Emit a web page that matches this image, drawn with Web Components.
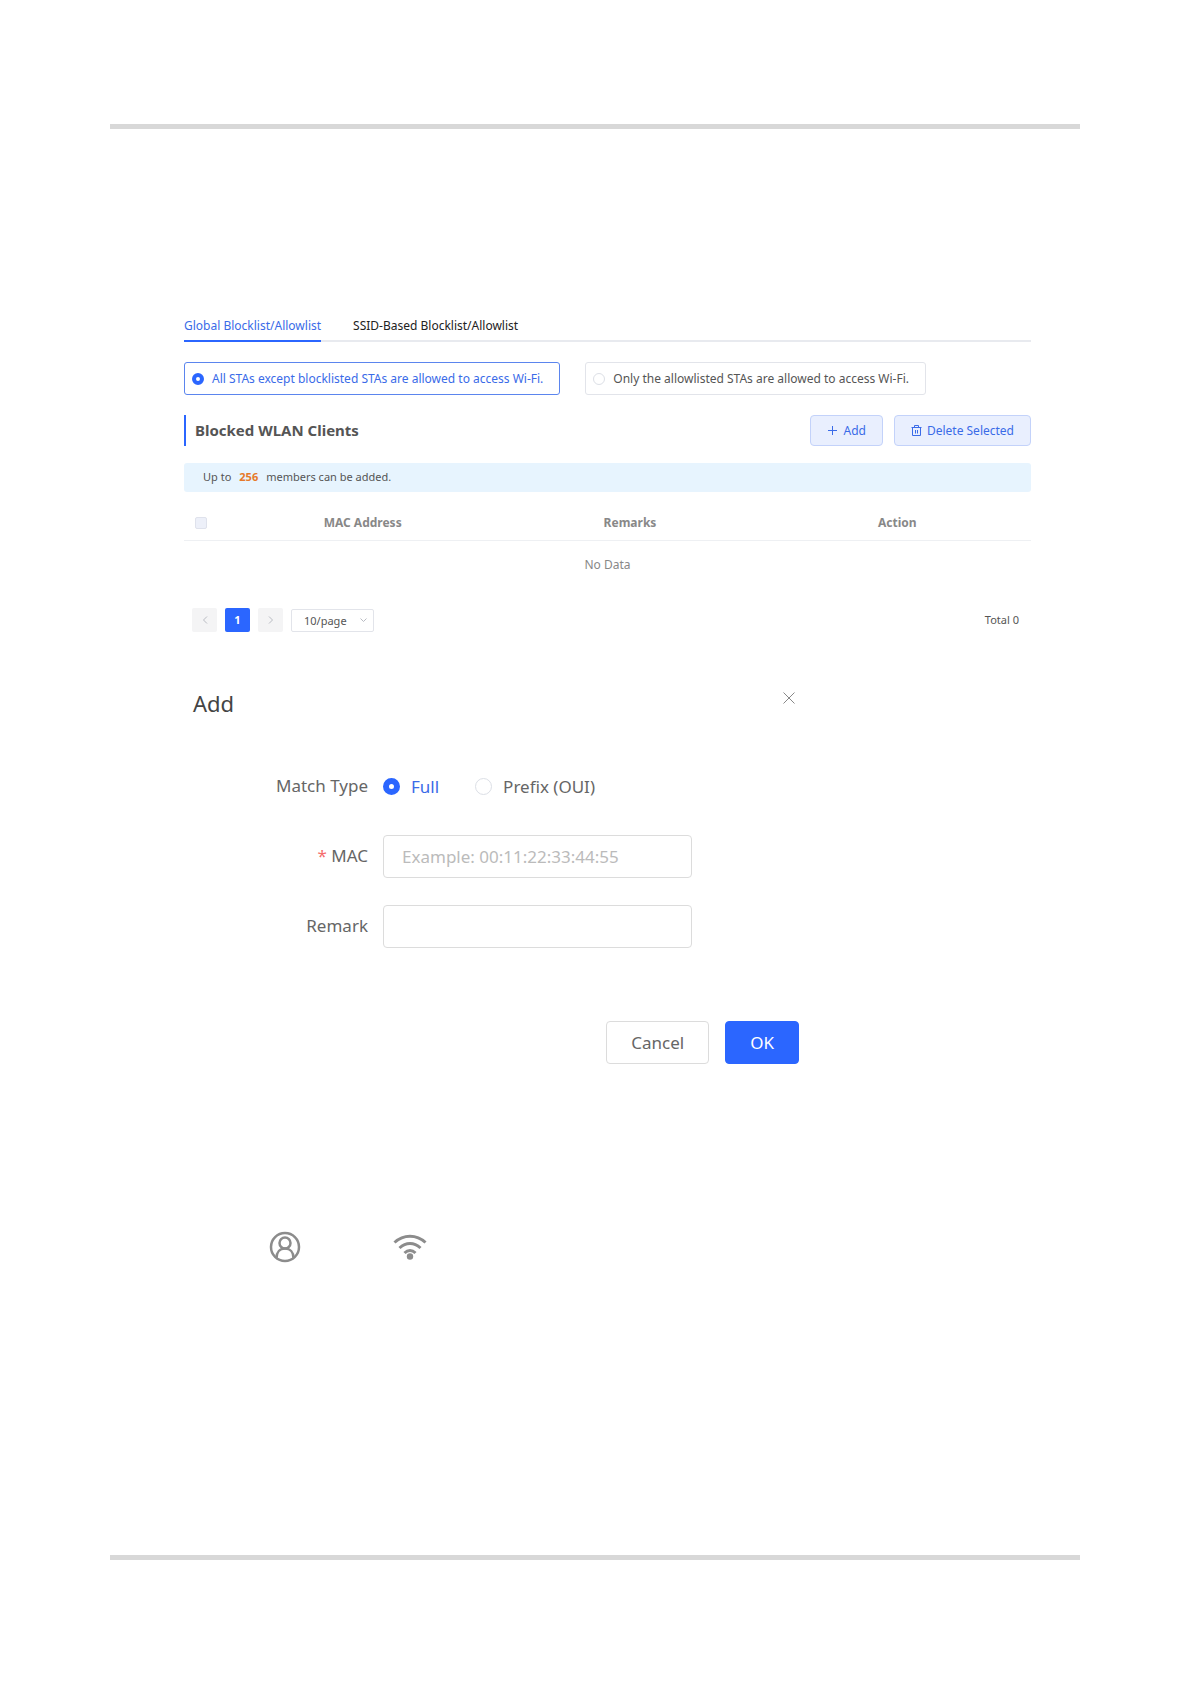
<!DOCTYPE html>
<html lang="en">
<head>
<meta charset="utf-8">
<meta name="viewport" content="width=device-width, initial-scale=1">
<title>Blocklist/Allowlist</title>
<style>
    body {
        margin: 0;
        background: #fff;
        color: #555;
        font: 12px/16px "Noto Sans", "Open Sans", sans-serif;
        --blue: #2b66ff;
        --link: #3a6be8;
    }
</style>
</head>
<body>
<doc-page>
    <list-tabs></list-tabs>
    <access-mode></access-mode>
    <section-bar heading="Blocked WLAN Clients">
        <tool-button icon="plus">Add</tool-button>
        <tool-button icon="trash">Delete Selected</tool-button>
    </section-bar>
    <info-banner>Up to <b slot="count">256</b><span slot="after">members can be added.</span></info-banner>
    <client-table></client-table>
    <page-nav></page-nav>
    <add-dialog></add-dialog>
    <icon-strip></icon-strip>
</doc-page>

<script>
class BaseElement extends HTMLElement {
    constructor() {
        super();
        this.attachShadow({ mode: 'open' });
        this.shadowRoot.innerHTML = `
            <style>
                * { box-sizing: border-box; }
                :host { display: block; }
                button, input, select { font: inherit; color: inherit; margin: 0; }
                svg { display: block; fill: none; stroke: currentColor; }
                input[type=radio] {
                    appearance: none;
                    flex: none;
                    width: 12px;
                    height: 12px;
                    border: 1px solid #dcdfe6;
                    border-radius: 50%;
                    background: #fff;
                }
                input[type=radio]:checked {
                    border: 4px solid var(--blue);
                }
            </style>
            ${this.render()}
        `;
    }
}

class DocPage extends BaseElement {
    render() {
        return `
            <style>
                :host { padding: 124px 111px 124px 110px; }
                hr { height: 5px; margin: 0; border: 0; background: #d8d8d8; }
                main { padding: 186px 49px 292px 74px; }
            </style>
            <hr>
            <main><slot></slot></main>
            <hr>
        `;
    }
}

class ListTabs extends BaseElement {
    render() {
        return `
            <style>
                nav {
                    display: flex;
                    gap: 32px;
                    border-bottom: 2px solid #e8eaef;
                }
                a {
                    margin-bottom: -2px;
                    padding: 3px 0 6px;
                    border-bottom: 2px solid transparent;
                    color: #222;
                    text-decoration: none;
                }
                a[aria-current] { color: var(--link); border-color: var(--blue); }
            </style>
            <nav>
                <a href="#global" aria-current="page">Global Blocklist/Allowlist</a>
                <a href="#ssid">SSID-Based Blocklist/Allowlist</a>
            </nav>
        `;
    }
}

class AccessMode extends BaseElement {
    render() {
        return `
            <style>
                :host { display: flex; gap: 25px; margin-top: 20px; }
                label {
                    display: flex;
                    align-items: center;
                    gap: 8px;
                    height: 33px;
                    padding: 0 16px 0 7px;
                    border: 1px solid #e2e4ea;
                    border-radius: 3px;
                }
                label:has(:checked) { color: var(--link); border-color: #5b85ee; }
            </style>
            <label><input type="radio" name="mode" checked>All STAs except blocklisted STAs are allowed to access Wi-Fi.</label>
            <label><input type="radio" name="mode">Only the allowlisted STAs are allowed to access Wi-Fi.</label>
        `;
    }
}

class SectionBar extends BaseElement {
    render() {
        return `
            <style>
                :host {
                    display: flex;
                    align-items: center;
                    gap: 11px;
                    height: 31px;
                    margin-top: 20px;
                }
                h2 {
                    flex: 1;
                    margin: 0;
                    padding-left: 9px;
                    border-left: 2px solid var(--blue);
                    font-size: 15px;
                    line-height: 31px;
                }
            </style>
            <h2></h2>
            <slot></slot>
        `;
    }

    connectedCallback() {
        this.shadowRoot.querySelector('h2').textContent = this.getAttribute('heading');
    }
}

const toolIcons = {
    plus: '<path d="M5.5 1v9M1 5.5h9"/>',
    trash: '<path d="M.5 2.5h10M3.5 2.5v-2h4v2M1.5 2.5v8h8v-8M4.5 5v3.500M6.500 5v3.500"/>'
};

class ToolButton extends BaseElement {
    render() {
        return `
            <style>
                button {
                    display: flex;
                    align-items: center;
                    gap: 5px;
                    height: 31px;
                    padding: 0 16px;
                    border: 1px solid #c3d2fa;
                    border-radius: 4px;
                    background: #e9effe;
                    color: var(--link);
                }
            </style>
            <button type="button">
                <svg width="11" height="11" viewBox="0 0 11 11">${toolIcons[this.getAttribute('icon')]}</svg>
                <slot></slot>
            </button>
        `;
    }
}

class InfoBanner extends BaseElement {
    render() {
        return `
            <style>
                :host {
                    display: flex;
                    align-items: center;
                    gap: 8px;
                    height: 29px;
                    margin-top: 17px;
                    padding: 0 19px 2px;
                    box-sizing: border-box;
                    border-radius: 3px;
                    background: #e7f4fe;
                    font-size: 11px;
                }
                ::slotted(b) { color: #e6792b; }
            </style>
            <span><slot></slot></span>
            <slot name="count"></slot>
            <slot name="after"></slot>
        `;
    }
}

class ClientTable extends BaseElement {
    render() {
        return `
            <style>
                :host { margin-top: 12px; }
                table {
                    width: 100%;
                    table-layout: fixed;
                    border-collapse: collapse;
                    color: #888;
                    text-align: center;
                }
                th, td { padding: 0; }
                th { height: 36px; padding-top: 2px; border-bottom: 1px solid #eef0f3; }
                th:first-child { width: 45px; padding-left: 11px; text-align: left; }
                td { height: 50px; }
                input {
                    appearance: none;
                    display: block;
                    width: 12px;
                    height: 12px;
                    border: 1px solid #dfe2ec;
                    border-radius: 2px;
                    background: #edf0f9;
                }
            </style>
            <table>
                <thead>
                    <tr>
                        <th><input type="checkbox" aria-label="Select all" disabled></th>
                        <th>MAC Address</th>
                        <th>Remarks</th>
                        <th>Action</th>
                    </tr>
                </thead>
                <tbody>
                    <tr><td colspan="4">No Data</td></tr>
                </tbody>
            </table>
        `;
    }
}

class PageNav extends BaseElement {
    render() {
        return `
            <style>
                :host {
                    display: flex;
                    align-items: center;
                    gap: 8px;
                    margin-top: 17px;
                    padding: 0 12px 0 8px;
                    font-size: 11px;
                }
                button {
                    display: grid;
                    place-items: center;
                    width: 25px;
                    height: 24px;
                    padding: 0;
                    border: 0;
                    border-radius: 2px;
                    background: #f4f4f5;
                    color: #b8bbc2;
                }
                button[aria-current] { background: var(--blue); color: #fff; font-weight: bold; }
                .size { display: grid; align-items: center; margin-top: 2px; }
                .size > * { grid-area: 1 / 1; }
                .size svg { justify-self: end; margin-right: 7px; color: #b8bbc2; pointer-events: none; }
                select {
                    appearance: none;
                    width: 83px;
                    height: 23px;
                    padding: 0 12px;
                    border: 1px solid #e2e4ea;
                    border-radius: 2px;
                    background: #fff;
                }
                .total { margin-left: auto; }
            </style>
            <button type="button" aria-label="Previous" disabled><svg width="6" height="8" viewBox="0 0 6 8"><path d="M5 .5 1.500 4 5 7.500"/></svg></button>
            <button type="button" aria-current="page">1</button>
            <button type="button" aria-label="Next" disabled><svg width="6" height="8" viewBox="0 0 6 8"><path d="M1 .5 4.500 4 1 7.500"/></svg></button>
            <span class="size">
                <select aria-label="Rows per page"><option>10/page</option></select>
                <svg width="7" height="5" viewBox="0 0 7 5"><path d="M.5 .5l3 3 3-3"/></svg>
            </span>
            <span class="total">Total 0</span>
        `;
    }
}

class AddDialog extends BaseElement {
    render() {
        return `
            <style>
                :host {
                    max-width: 606px;
                    margin: 55px 0 0 9px;
                    color: #666;
                    font-size: 17px;
                    line-height: 24px;
                }
                header { display: flex; justify-content: space-between; align-items: flex-start; }
                h3 { margin: 0; color: #444; font-size: 22px; line-height: 32px; font-weight: normal; }
                .close { padding: 5px 4px; border: 0; background: none; color: #888; }
                form {
                    display: grid;
                    grid-template-columns: 175px 309px;
                    gap: 27px 15px;
                    margin-top: 46px;
                }
                form > label, .name { align-self: center; padding-bottom: 2px; text-align: right; }
                .required::before { content: "* "; color: #f56c6c; }
                .match { display: flex; align-items: center; gap: 36px; height: 43px; }
                .match label { display: flex; align-items: center; gap: 11px; }
                .match label:has(:checked) { color: var(--link); }
                input[type=radio] { width: 17px; height: 17px; }
                input[type=radio]:checked { border-width: 6px; }
                input[type=text] {
                    width: 100%;
                    height: 43px;
                    padding: 0 18px;
                    border: 1px solid #dcdcdc;
                    border-radius: 4px;
                    outline: 0;
                }
                ::placeholder { color: #bbb; opacity: 1; }
                footer { display: flex; justify-content: flex-end; gap: 16px; margin-top: 73px; }
                footer button {
                    height: 43px;
                    padding: 0 24px;
                    border: 1px solid #dcdcdc;
                    border-radius: 4px;
                    background: #fff;
                }
                footer .ok { border-color: var(--blue); background: var(--blue); color: #fff; }
            </style>
            <header>
                <h3>Add</h3>
                <button class="close" type="button" aria-label="Close"><svg width="12" height="12" viewBox="0 0 12 12"><path d="M.5.5l11 11M11.500.5l-11 11"/></svg></button>
            </header>
            <form id="add">
                <span class="name" id="match">Match Type</span>
                <div class="match" role="radiogroup" aria-labelledby="match">
                    <label><input type="radio" name="type" checked>Full</label>
                    <label><input type="radio" name="type">Prefix (OUI)</label>
                </div>
                <label class="required" for="mac">MAC</label>
                <input type="text" id="mac" placeholder="Example: 00:11:22:33:44:55">
                <label for="remark">Remark</label>
                <input type="text" id="remark">
            </form>
            <footer>
                <button type="button">Cancel</button>
                <button class="ok" type="submit" form="add">OK</button>
            </footer>
        `;
    }
}

class IconStrip extends BaseElement {
    render() {
        return `
            <style>
                :host {
                    display: flex;
                    align-items: center;
                    gap: 92px;
                    margin: 167px 0 0 85px;
                    color: #8c8c8c;
                }
            </style>
            <svg width="32" height="32" viewBox="0 0 32 32" stroke-width="2.500">
                <circle cx="16" cy="16" r="14"/>
                <circle cx="16" cy="12" r="5.500"/>
                <path d="M7.500 27c0-6 3.500-9.500 8.500-9.500s8.500 3.500 8.500 9.500"/>
            </svg>
            <svg width="34" height="28" viewBox="0 0 34 28" stroke-width="3">
                <path d="M1.500 9.500c9-8.500 22-8.500 31 0M6.500 15c6.500-6 14.500-6 21 0M11.500 20c3.500-3.500 7.500-3.500 11 0"/>
                <circle cx="17" cy="23.500" r="3.200" fill="currentColor" stroke="none"/>
            </svg>
        `;
    }
}

customElements.define('doc-page', DocPage);
customElements.define('list-tabs', ListTabs);
customElements.define('access-mode', AccessMode);
customElements.define('section-bar', SectionBar);
customElements.define('tool-button', ToolButton);
customElements.define('info-banner', InfoBanner);
customElements.define('client-table', ClientTable);
customElements.define('page-nav', PageNav);
customElements.define('add-dialog', AddDialog);
customElements.define('icon-strip', IconStrip);
</script>
</body>
</html>
